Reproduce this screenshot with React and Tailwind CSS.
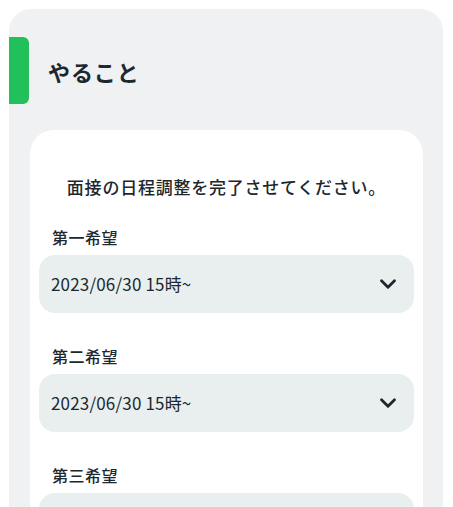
import { ChevronDown } from 'lucide-react';

const choices = [
  { label: '第一希望', value: '2023/06/30 15時~' },
  { label: '第二希望', value: '2023/06/30 15時~' },
  { label: '第三希望', value: '2023/06/30 15時~' },
];

const App = () => {
  return (
    <div
      className="h-screen overflow-hidden bg-white pl-[9px] pr-[10px] pt-[9px] text-[#1c282e]"
      style={{ fontFamily: '"Noto Sans CJK JP", "Noto Sans", sans-serif' }}
    >
      <div className="bg-[#f0f1f3] rounded-t-[22px] pt-[28px] pr-[20px] h-[520px]">
        {/* Header */}
        <div className="flex items-center">
          <div className="w-[20px] h-[67px] bg-[#22c05a] rounded-r-[6px]" />
          <h1 className="ml-[19px] text-[22px] font-bold leading-none tracking-[0.04em]">やること</h1>
        </div>

        {/* Card */}
        <div className="ml-[21px] mt-[26px] bg-white rounded-t-[24px] px-[9px] pt-[45px] pb-6">
          <p className="text-center text-[17px] leading-[24px] font-medium tracking-[0.045em]">
            面接の日程調整を完了させてください。
          </p>

          <div className="mt-[27px] flex flex-col gap-[32px]">
            {choices.map((c) => (
              <div key={c.label}>
                <p className="ml-[13px] text-[16px] leading-[22px] font-medium tracking-[0.03em]">{c.label}</p>
                <div className="mt-[7px] h-[58px] bg-[#e8efee] rounded-[16px] flex items-center justify-between pl-[12px] pr-[13px]">
                  <span className="text-[17px] tracking-[0.01em]">{c.value}</span>
                  <ChevronDown className="w-[26px] h-[26px]" strokeWidth={2.6} />
                </div>
              </div>
            ))}
          </div>
        </div>
      </div>
    </div>
  );
};

export default App;
